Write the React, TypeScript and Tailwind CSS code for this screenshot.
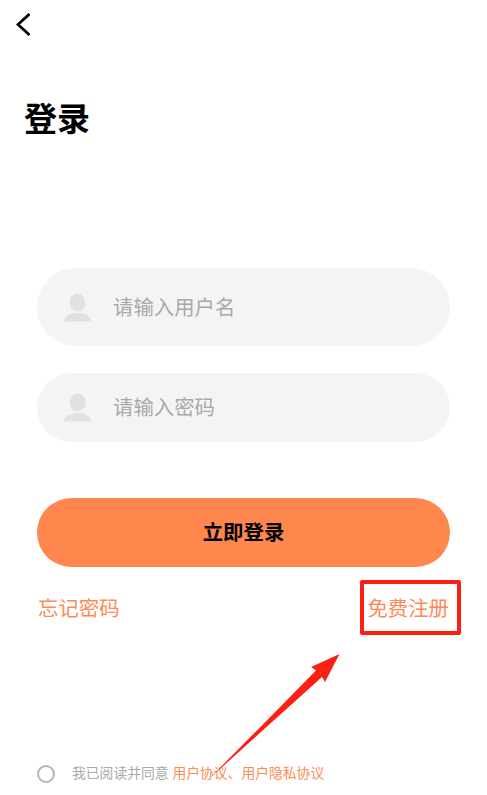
import React from "react";

const cjk = "font-['Liberation_Sans','Noto_Sans_CJK_SC',sans-serif]";

function UserGlyph() {
  return (
    <svg width="27" height="29" viewBox="0 0 27 29" className="shrink-0" fill="#e1e1e1">
      <ellipse cx="13.5" cy="9.5" rx="8" ry="9" />
      <path d="M0 28.5C0.5 23 6 20 13.5 20C21 20 26.5 23 27 28.5Z" />
    </svg>
  );
}

function Field({ label, height }: { label: string; height: string }) {
  return (
    <div className={`flex items-center rounded-full bg-[#f4f4f4] pl-[27px] ${height}`}>
      <UserGlyph />
      <span className="ml-[22px] pt-[2px] text-[20.4px] leading-none text-[#a9a9a9]">{label}</span>
    </div>
  );
}

export default function App() {
  return (
    <div className={`relative h-[795px] w-[487px] overflow-hidden bg-white ${cjk}`}>
      <div className="pl-[16px] pt-[13px]">
        <svg width="15" height="23" viewBox="0 0 15 23" fill="none" stroke="#000" strokeWidth="2.8">
          <path d="M13.5 1L2 11.5L13.5 22" />
        </svg>
      </div>
      <h1 className="ml-[24px] mt-[62px] text-[33px] font-bold leading-[44px] text-black">登录</h1>

      <div className="mx-[37px] mt-[126px] flex flex-col">
        <Field label="请输入用户名" height="h-[78px]" />
        <div className="mt-[27px]">
          <Field label="请输入密码" height="h-[69px]" />
        </div>
        <button className="mt-[56px] flex h-[69px] items-center justify-center rounded-full bg-[#ff864d] pt-[1px] text-[20.4px] font-bold text-black">
          立即登录
        </button>
        <div className="mt-[28px] flex items-center justify-between pl-[1px] pr-[1px] text-[20.4px] leading-[28px] text-[#ff8a55]">
          <span>忘记密码</span>
          <span>免费注册</span>
        </div>
      </div>

      <div className="ml-[37px] mt-[142px] flex items-center">
        <span className="h-[18px] w-[18px] rounded-full border-2 border-[#b5b5b5]" />
        <span className="ml-[17px] text-[13.8px] leading-none text-[#a9a9a9]">
          我已阅读并同意 <span className="text-[#ff8a55]">用户协议、用户隐私协议</span>
        </span>
      </div>

      {/* annotation drawn over the screenshot */}
      <div className="absolute left-[360px] top-[580px] h-[55px] w-[101px] rounded-[2px] border-[4px] border-[#fb1f14]" />
      <svg className="absolute left-0 top-0" width="487" height="795" viewBox="0 0 487 795" fill="#fb1f14">
        <path d="M339.5 654L311 667L316 670.5L210 778L322 677L325 682Z" />
      </svg>
    </div>
  );
}
